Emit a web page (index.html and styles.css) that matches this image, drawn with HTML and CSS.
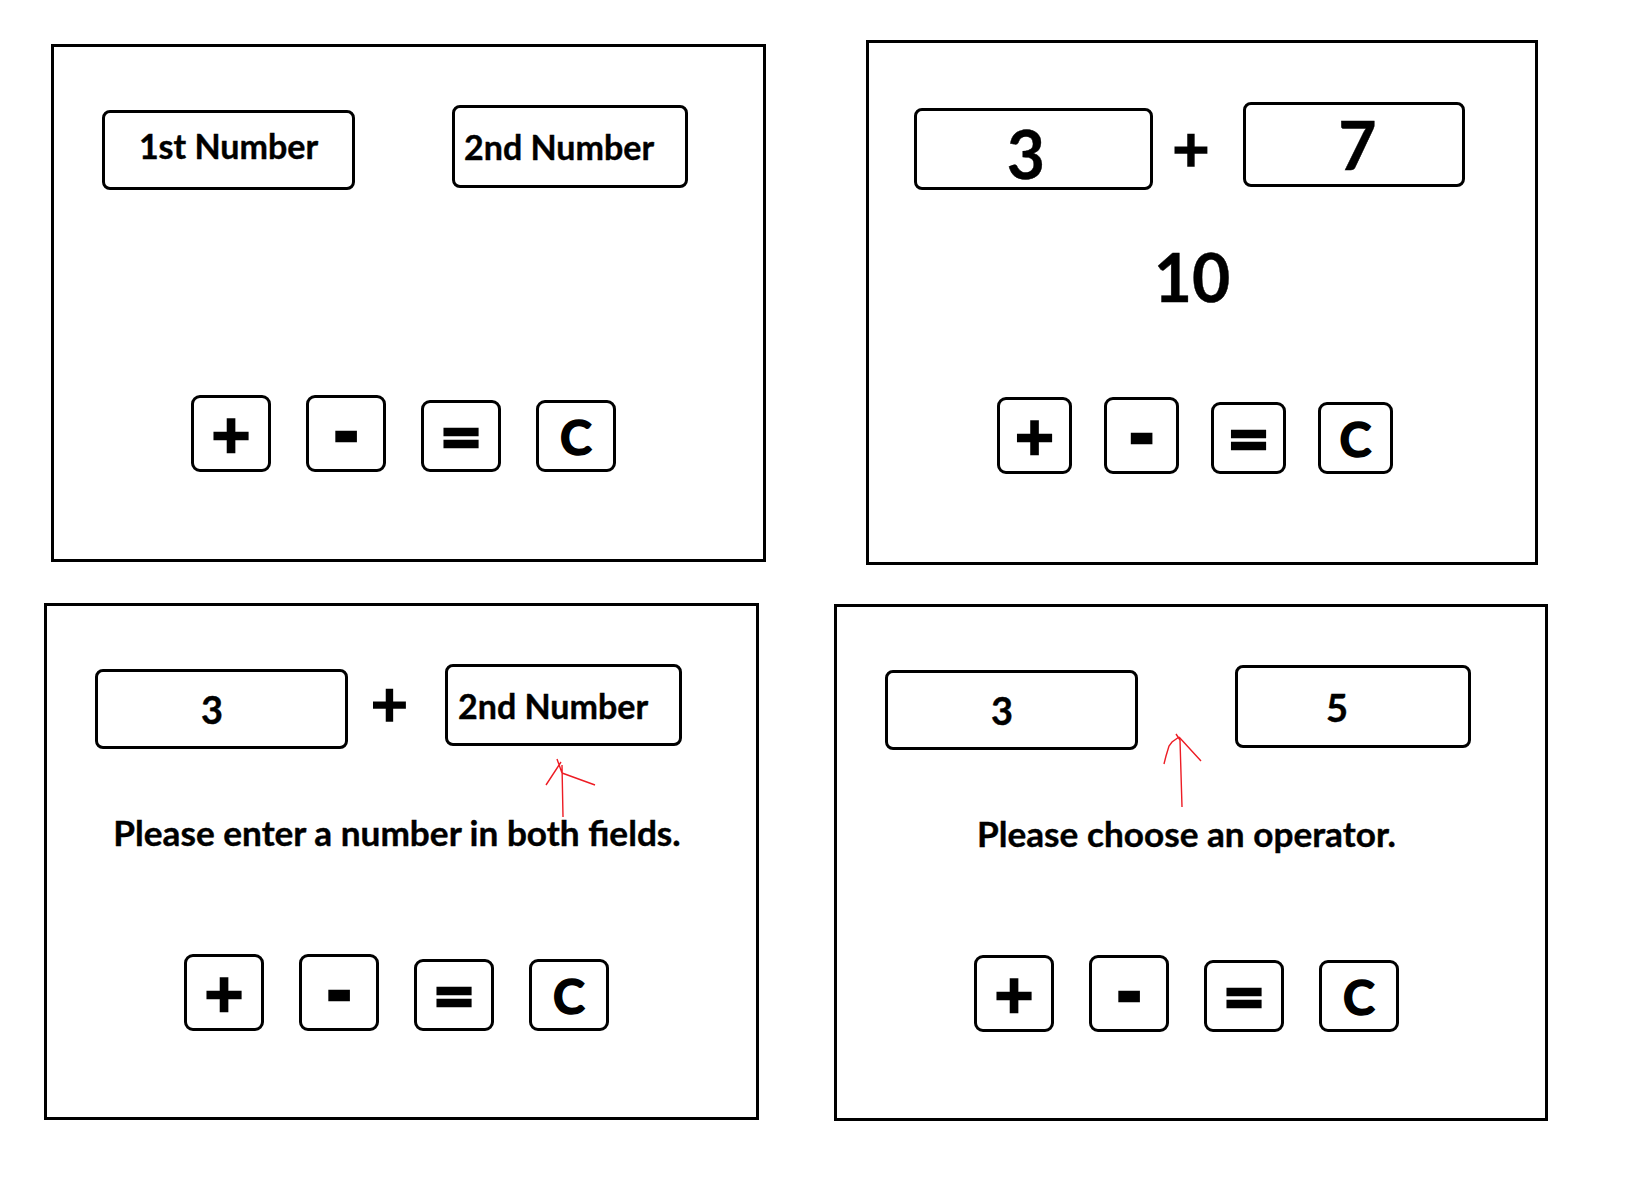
FILE: index.html
```html
<!DOCTYPE html>
<html lang="en">
<head>
    <meta charset="UTF-8">
    <title>Calculator Wireframes</title>
    <link rel="stylesheet" href="styles.css">
</head>
<body>

<div class="board">
    <!-- 1: empty state -->
    <section class="panel panel-first">
        <div class="fields">
            <input class="field field-first" type="text" placeholder="1st Number">
            <span class="op"></span>
            <input class="field field-b field-left" type="text" placeholder="2nd Number">
        </div>
        <p class="output"></p>
        <div class="keys">
            <button class="key key-tall key-sym">+</button>
            <button class="key key-tall key-sym key-minus">-</button>
            <button class="key key-sym">=</button>
            <button class="key">C</button>
        </div>
    </section>

    <!-- 2: result -->
    <section class="panel panel-result">
        <div class="fields">
            <input class="field field-three" type="text" value="3">
            <span class="op">+</span>
            <input class="field field-b field-seven" type="text" value="7">
        </div>
        <p class="output">10</p>
        <div class="keys">
            <button class="key key-tall key-sym">+</button>
            <button class="key key-tall key-sym key-minus">-</button>
            <button class="key key-sym">=</button>
            <button class="key">C</button>
        </div>
    </section>

    <!-- 3: missing number -->
    <section class="panel">
        <div class="fields">
            <input class="field field-num" type="text" value="3">
            <span class="op">+</span>
            <input class="field field-b field-left field-wide" type="text" placeholder="2nd Number">
        </div>
        <p class="output">Please enter a number in both fields.</p>
        <div class="keys">
            <button class="key key-tall key-sym">+</button>
            <button class="key key-tall key-sym key-minus">-</button>
            <button class="key key-sym">=</button>
            <button class="key">C</button>
        </div>
        <svg class="arrow arrow-fields" width="51" height="60" viewBox="0 0 51 60">
            <path d="M12 1 L17 15 M16 4 L1 27 M17 15 L50 27 M17 7 L18 59"/>
        </svg>
    </section>

    <!-- 4: missing operator -->
    <section class="panel panel-operator">
        <div class="fields">
            <input class="field field-num" type="text" value="3">
            <span class="op"></span>
            <input class="field field-b field-num field-five" type="text" value="5">
        </div>
        <p class="output">Please choose an operator.</p>
        <div class="keys">
            <button class="key key-tall key-sym">+</button>
            <button class="key key-tall key-sym key-minus">-</button>
            <button class="key key-sym">=</button>
            <button class="key">C</button>
        </div>
        <svg class="arrow arrow-op" width="41" height="75" viewBox="0 0 41 75">
            <path d="M14 1 L18 7 M17 4 L10 9 L7 13 L4 23 L2 31 M17 4 L39 28 M18 7 L20 74"/>
        </svg>
    </section>
</div>

</body>
</html>
```

FILE: styles.css
```css
body {
    margin: 0;
    background-color: #fff;
    font-family: Lato, "Liberation Sans", sans-serif;
    font-weight: 700;
    color: #000;
}
.board {
    display: grid;
    grid-template-columns: 790px 720px;
    row-gap: 38px;
    align-items: start;
    padding: 40px 0 0 44px;
}
.panel {
    position: relative;
    box-sizing: border-box;
    width: 715px;
    height: 517px;
    border: 3px solid #000;
    display: flex;
    flex-direction: column;
}
.panel-first {
    margin: 4px 0 0 7px;
    height: 518px;
}
.panel-result {
    margin-left: 32px;
    width: 672px;
    height: 525px;
}
.panel-operator {
    margin-top: 1px;
    width: 714px;
}

/* number fields */
.fields {
    display: flex;
    align-items: flex-start;
    margin-top: 58px;
    padding-left: 48px;
}
.field {
    box-sizing: border-box;
    width: 253px;
    height: 80px;
    margin: 5px 0 0;
    padding: 0;
    border: 3px solid #000;
    border-radius: 8px;
    background-color: #fff;
    color: #000;
    font: inherit;
    font-size: 34px;
    text-align: center;
    outline: none;
    -webkit-text-stroke: 0.4px #000;
}
.field::placeholder {
    color: #000;
    opacity: 1;
}
.field-first {
    padding-bottom: 9px;
}
.field-b {
    width: 236px;
    height: 83px;
    margin-top: 0;
}
.field-left {
    text-align: left;
    padding-left: 9px;
}
.field-wide {
    width: 237px;
    height: 82px;
    padding-left: 10px;
}
.field-num {
    font-size: 38px;
    padding-right: 19px;
}
.field-five {
    padding-right: 32px;
}
.op {
    box-sizing: border-box;
    width: 97px;
    height: 85px;
    padding: 0 14px 4px 0;
    font-family: "DejaVu Sans", sans-serif;
    font-size: 50px;
    line-height: 81px;
    text-align: center;
    -webkit-text-stroke: 1.6px #000;
}

.panel-result .fields {
    margin-top: 59px;
    padding-left: 45px;
}
.panel-result .field {
    width: 239px;
    height: 82px;
    margin-top: 6px;
    font-size: 66px;
}
.panel-result .field-b {
    width: 222px;
    height: 85px;
    margin-top: 0;
}
.panel-result .op {
    width: 90px;
    height: 88px;
    padding: 6px 14px 0 0;
    line-height: 82px;
}
.field-three {
    padding: 8px 15px 0 0;
}
.field-seven {
    padding-left: 7px;
}

/* message / result line */
.output {
    box-sizing: border-box;
    height: 143px;
    margin: 62px 0 0;
    padding-right: 9px;
    font-size: 35.2px;
    text-align: center;
    -webkit-text-stroke: 0.4px #000;
}
.panel-result .output {
    height: 153px;
    margin-top: 54px;
    padding-right: 20px;
    font-size: 66px;
    line-height: 1;
}

/* operator keys */
.keys {
    display: flex;
    align-items: flex-end;
    gap: 35px;
    padding-left: 137px;
}
.panel-result .keys {
    gap: 32px;
    padding-left: 128px;
}
.key {
    box-sizing: border-box;
    width: 80px;
    height: 72px;
    padding: 0;
    border: 3px solid #000;
    border-radius: 9px;
    background-color: #fff;
    color: #000;
    font: inherit;
    font-size: 48px;
    display: flex;
    align-items: center;
    justify-content: center;
    -webkit-text-stroke: 1.6px #000;
}
.key-sym {
    font-family: "DejaVu Sans", sans-serif;
    font-size: 52px;
    -webkit-text-stroke: 2.6px #000;
}
.key-minus {
    font-size: 62px;
}
.key-tall {
    height: 77px;
}
.panel-result .key {
    width: 75px;
}

/* red annotation arrows */
.arrow {
    position: absolute;
}
.arrow path {
    fill: none;
    stroke: #ed1c24;
    stroke-width: 1.4;
}
.arrow-fields {
    left: 498px;
    top: 152px;
}
.arrow-op {
    left: 325px;
    top: 126px;
}
```
